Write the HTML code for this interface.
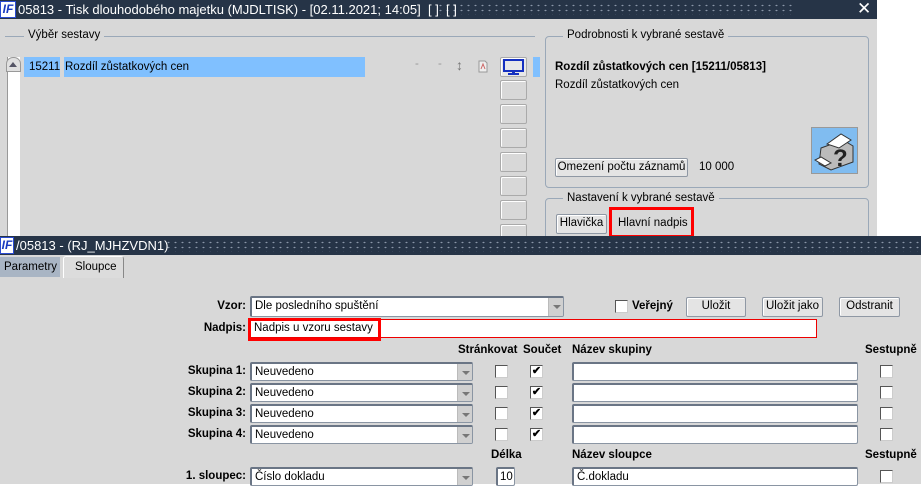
<!DOCTYPE html>
<html><head><meta charset="utf-8"><style>
*{margin:0;padding:0;box-sizing:border-box}
body{width:921px;height:484px;overflow:hidden;background:#fff;font-family:"Liberation Sans",Arial,sans-serif;font-size:11.5px;color:#000;position:relative}
.a{position:absolute;white-space:nowrap}
.tb{background:#263447;color:#fff}
.dots{background-image:radial-gradient(#8a96a8 0.8px,transparent 1.2px);background-size:7px 5px}
.btn{position:absolute;white-space:nowrap;background:#e4e4e4;border:1px solid #8f98a4;border-radius:2px;box-shadow:inset 1px 1px 0 #fff;text-align:center;line-height:17px;font-size:11.5px}
.inp{position:absolute;white-space:nowrap;overflow:hidden;background:#fff;border:1px solid #8a95a3;border-top:2px solid #6a7585;border-left:2px solid #6a7585;border-radius:2px;padding-left:3px;line-height:16px;font-size:11.5px}
.cmb .ar{position:absolute;right:0;top:0;bottom:0;width:15px;background:#d0d0d0;border-left:1px solid #bbb}
.cmb .ar:after{content:"";position:absolute;left:4px;top:7px;border:4px solid transparent;border-top:4px solid #777}
.cb{position:absolute;width:13px;height:13px;background:#fff;border:1px solid #555;border-right-color:#ccc;border-bottom-color:#ccc;font-size:11px;line-height:10px;text-align:center;font-weight:bold}
.lb{position:absolute;font-weight:bold;text-align:right;white-space:nowrap}
.ebtn{position:absolute;left:500px;width:27px;height:20px;border:1px solid #aaa;border-radius:2px;background:#d8d8d8;box-shadow:inset 1px 1px 0 #fff}
</style></head><body>
<div class="a" style="left:0;top:0;width:877px;height:236px;background:#d8d8d8"></div>
<div class="a tb" style="left:0;top:0;width:877px;height:19px"></div>
<div class="a dots" style="left:437px;top:3px;width:355px;height:12px"></div>
<div class="a" style="left:0;top:1px;width:16px;height:17px;background:#fff;border:1px solid #2a4bd0;color:#1a3bc0;font-weight:bold;font-style:italic;font-size:12px;line-height:15px;text-align:center">IF</div>
<div class="a" style="left:18px;top:2px;color:#fff;font-size:13px">05813 - Tisk dlouhodobého majetku (MJDLTISK) - [02.11.2021; 14:05]&nbsp; [ ]&nbsp; [ ]</div>
<div class="a" style="left:857px;top:-1px;color:#fff;font-size:17px">✕</div>
<div class="a" style="left:5px;top:36px;width:530px;border-top:1px solid #9aa8b8"></div>
<div class="a" style="left:24px;top:29px;background:#d8d8d8;padding:0 4px">Výběr sestavy</div>
<div class="a" style="left:7px;top:57px;width:13px;height:179px;background:#fff;border-left:1px solid #999"></div>
<div class="a" style="left:6px;top:57px;width:15px;height:15px;background:#e0e0e0;border:1px solid #999;border-radius:7px 7px 0 0"></div>
<div class="a" style="left:9px;top:62px;border:4px solid transparent;border-bottom:5px solid #556;border-top:0"></div>
<div class="a" style="left:24px;top:57px;width:36px;height:20px;background:#80c0ff;padding:4px 0 0 5px">15211</div>
<div class="a" style="left:64px;top:57px;width:301px;height:20px;background:#80c0ff;padding:4px 0 0 1px">Rozdíl zůstatkových cen</div>
<div class="a" style="left:415px;top:58px;color:#999">-</div>
<div class="a" style="left:438px;top:58px;color:#999">-</div>
<div class="a" style="left:456px;top:57px;color:#777;font-size:14px">↕</div>
<svg class="a" style="left:478px;top:60px" width="10" height="13"><path d="M1 1h6l2 2v9H1z" fill="#eee" stroke="#999"/><path d="M3 9l2-5 2 5" fill="none" stroke="#c66"/></svg>
<div class="ebtn" style="top:57px;background:#e8e8e8"></div>
<svg class="a" style="left:503px;top:59px" width="21" height="17"><rect x="1" y="1" width="19" height="11" fill="none" stroke="#1530c0" stroke-width="2"/><rect x="9" y="12" width="3" height="3" fill="#1530c0"/><rect x="5" y="14" width="11" height="2" fill="#1530c0"/></svg>
<div class="a" style="left:533px;top:57px;width:7px;height:20px;background:#80c0ff"></div>
<div class="ebtn" style="top:80px"></div><div class="ebtn" style="top:104px"></div><div class="ebtn" style="top:128px"></div><div class="ebtn" style="top:152px"></div><div class="ebtn" style="top:176px"></div><div class="ebtn" style="top:200px"></div><div class="ebtn" style="top:224px"></div>
<div class="a" style="left:545px;top:36px;width:324px;height:152px;border:1px solid #9aa8b8;border-radius:4px"></div>
<div class="a" style="left:563px;top:29px;background:#d8d8d8;padding:0 4px">Podrobnosti k vybrané sestavě</div>
<div class="a" style="left:555px;top:61px;font-weight:bold">Rozdíl zůstatkových cen [15211/05813]</div>
<div class="a" style="left:555px;top:79px">Rozdíl zůstatkových cen</div>
<div class="btn" style="left:555px;top:158px;width:133px;height:19px">Omezení počtu záznamů</div>
<div class="a" style="left:699px;top:161px">10 000</div>
<div class="a" style="left:811px;top:127px;width:47px;height:47px;background:#80bcf0;border:1px solid #999"></div>
<svg class="a" style="left:813px;top:130px" width="44" height="42"><path d="M8 18l22-8 10 6v16l-22 8-12-6z" fill="#bbb" stroke="#333"/><path d="M14 14l14-10 10 6-12 8z" fill="#fff" stroke="#333"/><path d="M2 30l10 6 6-3-10-6z" fill="#fff" stroke="#333"/><text x="20" y="36" font-size="24" font-weight="bold" font-family="Liberation Sans" fill="#222">?</text></svg>
<div class="a" style="left:545px;top:198px;width:324px;height:50px;border:1px solid #9aa8b8;border-radius:4px"></div>
<div class="a" style="left:563px;top:192px;background:#d8d8d8;padding:0 4px">Nastavení k vybrané sestavě</div>
<div class="btn" style="left:556px;top:214px;width:51px;height:20px">Hlavička</div>
<div class="a" style="left:609px;top:207px;width:85px;height:31px;border:3px solid #f00"></div>
<div class="a" style="left:618px;top:217px">Hlavní nadpis</div>
<div class="a" style="left:0;top:236px;width:921px;height:248px;background:#d8d8d8"></div>
<div class="a tb" style="left:0;top:236px;width:921px;height:19px"></div>
<div class="a dots" style="left:165px;top:240px;width:756px;height:12px"></div>
<div class="a" style="left:0;top:237px;width:14px;height:17px;background:#fff;border:1px solid #2a4bd0;color:#1a3bc0;font-weight:bold;font-style:italic;font-size:12px;line-height:15px;text-align:center">IF</div>
<div class="a" style="left:16px;top:238px;color:#fff;font-size:13px">/05813 - (RJ_MJHZVDN1)</div>
<div class="a" style="left:0;top:257px;width:60px;height:20px;background:#a9b5c4;padding:4px 0 0 4px">Parametry</div>
<div class="a" style="left:63px;top:256px;width:61px;height:22px;background:#dcdcdc;border:1px solid #fff;border-right-color:#888;border-bottom:none;border-radius:3px 3px 0 0;padding:4px 0 0 11px">Sloupce</div>
<div class="lb" style="left:150px;width:96px;top:300px">Vzor:</div>
<div class="inp cmb" style="left:250px;top:296px;width:314px;height:21px">Dle posledního spuštění<span class="ar"></span></div>
<div class="cb" style="left:615px;top:300px"></div>
<div class="lb" style="left:632px;top:300px;text-align:left">Veřejný</div>
<div class="btn" style="left:686px;top:297px;width:60px;height:20px">Uložit</div>
<div class="btn" style="left:762px;top:297px;width:61px;height:20px">Uložit jako</div>
<div class="btn" style="left:839px;top:297px;width:61px;height:20px">Odstranit</div>
<div class="lb" style="left:150px;width:96px;top:322px">Nadpis:</div>
<div class="a" style="left:250px;top:319px;width:567px;height:19px;background:#fff;border:1px solid #e00;padding:2px 0 0 3px">Nadpis u vzoru sestavy</div>
<div class="a" style="left:248px;top:318px;width:133px;height:23px;border:3px solid #f00"></div>
<div class="lb" style="left:458px;top:344px">Stránkovat</div>
<div class="lb" style="left:523px;top:344px">Součet</div>
<div class="lb" style="left:572px;top:344px">Název skupiny</div>
<div class="lb" style="left:865px;top:344px">Sestupně</div>

<div class="lb" style="left:150px;width:96px;top:365px">Skupina 1:</div>
<div class="inp cmb" style="left:250px;top:362px;width:223px;height:19px">Neuvedeno<span class="ar"></span></div>
<div class="cb" style="left:495px;top:365px"></div><div class="cb" style="left:530px;top:365px">✔</div>
<div class="inp" style="left:572px;top:362px;width:286px;height:19px"></div><div class="cb" style="left:880px;top:365px"></div>

<div class="lb" style="left:150px;width:96px;top:386px">Skupina 2:</div>
<div class="inp cmb" style="left:250px;top:383px;width:223px;height:19px">Neuvedeno<span class="ar"></span></div>
<div class="cb" style="left:495px;top:386px"></div><div class="cb" style="left:530px;top:386px">✔</div>
<div class="inp" style="left:572px;top:383px;width:286px;height:19px"></div><div class="cb" style="left:880px;top:386px"></div>

<div class="lb" style="left:150px;width:96px;top:407px">Skupina 3:</div>
<div class="inp cmb" style="left:250px;top:404px;width:223px;height:19px">Neuvedeno<span class="ar"></span></div>
<div class="cb" style="left:495px;top:407px"></div><div class="cb" style="left:530px;top:407px">✔</div>
<div class="inp" style="left:572px;top:404px;width:286px;height:19px"></div><div class="cb" style="left:880px;top:407px"></div>

<div class="lb" style="left:150px;width:96px;top:428px">Skupina 4:</div>
<div class="inp cmb" style="left:250px;top:425px;width:223px;height:19px">Neuvedeno<span class="ar"></span></div>
<div class="cb" style="left:495px;top:428px"></div><div class="cb" style="left:530px;top:428px">✔</div>
<div class="inp" style="left:572px;top:425px;width:286px;height:19px"></div><div class="cb" style="left:880px;top:428px"></div>

<div class="lb" style="left:491px;top:449px">Délka</div>
<div class="lb" style="left:572px;top:449px">Název sloupce</div>
<div class="lb" style="left:865px;top:449px">Sestupně</div>
<div class="lb" style="left:150px;width:96px;top:470px">1. sloupec:</div>
<div class="inp cmb" style="left:250px;top:467px;width:223px;height:19px">Číslo dokladu<span class="ar"></span></div>
<div class="inp" style="left:496px;top:467px;width:19px;height:19px;padding-left:2px">10</div>
<div class="inp" style="left:572px;top:467px;width:286px;height:19px">Č.dokladu</div>
<div class="cb" style="left:880px;top:470px"></div>
</body></html>
